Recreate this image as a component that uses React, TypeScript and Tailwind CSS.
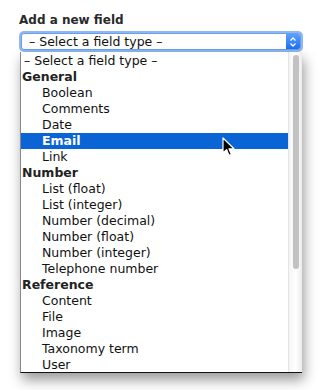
import React from 'react'

const rows: { label: string; group?: boolean; sel?: boolean; top?: boolean }[] = [
  { label: '– Select a field type –', top: true },
  { label: 'General', group: true },
  { label: 'Boolean' },
  { label: 'Comments' },
  { label: 'Date' },
  { label: 'Email', sel: true },
  { label: 'Link' },
  { label: 'Number', group: true },
  { label: 'List (float)' },
  { label: 'List (integer)' },
  { label: 'Number (decimal)' },
  { label: 'Number (float)' },
  { label: 'Number (integer)' },
  { label: 'Telephone number' },
  { label: 'Reference', group: true },
  { label: 'Content' },
  { label: 'File' },
  { label: 'Image' },
  { label: 'Taxonomy term' },
  { label: 'User' },
]

function Cursor() {
  return (
    <svg width="13" height="20" viewBox="0 0 13 20" className="absolute left-[222px] top-[137px]">
      <path
        d="M1 1 L1 16 L4.6 12.6 L7 18.4 L9.4 17.4 L7 11.8 L12 11.8 Z"
        fill="#000"
        stroke="#fff"
        strokeWidth="1.2"
        strokeLinejoin="round"
      />
    </svg>
  )
}

export default function App() {
  return (
    <div className="relative w-[329px] h-[390px] bg-white font-['Lucida_Grande','DejaVu_Sans',sans-serif] text-[#111]">
      <div className="pl-[19px] pt-[12px]">
        <div className="text-[12px] font-bold leading-[16px] text-[#2a2a2a]">Add a new field</div>
        <div className="mt-[3px] w-[284px] h-[21px] rounded-[5px] p-[2px] bg-[#8db8f5]">
          <div className="flex h-full rounded-[3px] bg-white border border-[#6a9fe8] overflow-hidden">
            <div className="flex-1 pl-[7px] text-[12.5px] leading-[15px] text-[#111]">– Select a field type –</div>
            <div className="w-[14px] flex items-center justify-center bg-gradient-to-b from-[#5aa0ff] to-[#1e6ff0]">
              <svg width="8" height="12" viewBox="0 0 8 12">
                <path d="M1.5 4.5 L4 2 L6.5 4.5 M1.5 7.5 L4 10 L6.5 7.5" fill="none" stroke="#fff" strokeWidth="1.3" />
              </svg>
            </div>
          </div>
        </div>
      </div>
      <div className="absolute left-[20px] top-[52px] w-[282px] h-[321px] bg-white border-l border-l-[#888] border-b border-b-[#111] shadow-[2px_7px_12px_rgba(0,0,0,0.4)] flex">
        <div className="flex-1 pt-[1px]">
          {rows.map((r) => (
            <div
              key={r.label}
              className={
                'h-[16px] text-[12.5px] leading-[16px] whitespace-nowrap ' +
                (r.group ? 'pl-[1px] font-bold text-[#222] ' : r.top ? 'pl-[3px] ' : 'pl-[21px] ') +
                (r.sel ? 'bg-[#0a64d6] text-white font-bold' : '')
              }
            >
              {r.label}
            </div>
          ))}
        </div>
        <div className="w-[14px] border-l border-[#e4e4e4] bg-gradient-to-r from-[#f4f4f4] via-white to-[#ececec] flex justify-center pt-[3px]">
          <div className="w-[6px] h-[214px] rounded-full bg-[#c2c2c2]" />
        </div>
      </div>
      <Cursor />
    </div>
  )
}
